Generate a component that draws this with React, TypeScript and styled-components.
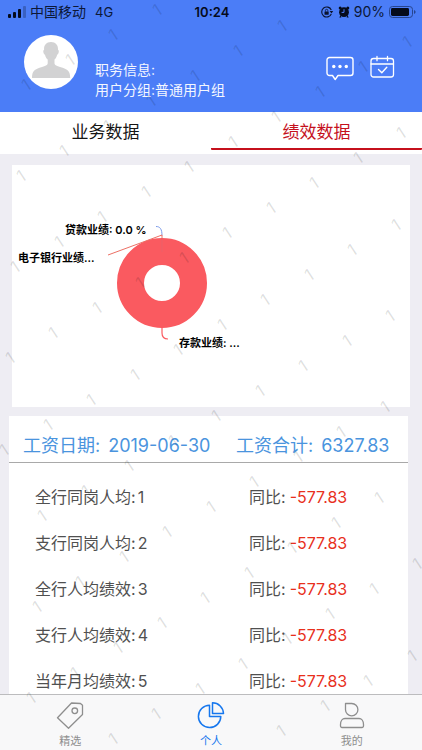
import React, { useEffect, useState } from "react";
import styled, { createGlobalStyle } from "styled-components";

const GlobalStyle = createGlobalStyle`
  *, *::before, *::after { box-sizing: border-box; }
  body {
    margin: 0;
    background: #eeedf3;
    font-family: Inter, "Noto Sans CJK SC", sans-serif;
    color: #111;
  }
  button { font-family: inherit; }
`;

const Screen = styled.div`
  position: relative;
  display: flex;
  flex-direction: column;
  height: 100vh;
  overflow: hidden;
`;

const Header = styled.header`
  flex: none;
  background: #4b7df7;
  padding-bottom: 12px;
`;

const StatusBar = styled.div`
  display: grid;
  grid-template-columns: 1fr auto 1fr;
  align-items: center;
  height: 24px;
  padding: 0 6px 0 8px;
  font-size: 14px;
  line-height: 24px;
  color: #0c1838;
`;

const StatusGroup = styled.div<{ $end?: boolean }>`
  display: flex;
  align-items: center;
  justify-content: ${(p) => (p.$end ? "flex-end" : "flex-start")};
  gap: ${(p) => (p.$end ? "4px" : "4px")};
`;

const Network = styled.span`
  margin-left: 5px;
  font-size: 13px;
`;

const Clock = styled.time`
  font-size: 13px;
  font-weight: 600;
  color: #050b1c;
`;

const Profile = styled.div`
  display: flex;
  align-items: flex-start;
  padding: 11px 26px 0 24px;
`;

const Avatar = styled.div`
  flex: none;
  width: 54px;
  height: 54px;
  border-radius: 50%;
  background: #fff;
  overflow: hidden;
`;

const ProfileText = styled.div`
  flex: 1;
  margin-left: 17px;
  padding-top: 25px;
  font-size: 14px;
  line-height: 20px;
  color: #f4f7ff;
  white-space: nowrap;
`;

const ProfileLine = styled.p`
  margin: 0;
`;

const HeaderActions = styled.div`
  display: flex;
  gap: 16px;
  padding-top: 20px;
`;

const IconButton = styled.button`
  display: block;
  padding: 0;
  border: 0;
  background: none;
  color: #fff;
  line-height: 0;
  cursor: pointer;
`;

const Tabs = styled.div`
  flex: none;
  display: grid;
  grid-template-columns: 1fr 1fr;
  height: 42px;
  padding-bottom: 4px;
  background: #fff;
`;

const Tab = styled.button<{ $active: boolean }>`
  padding: 4px 0 0;
  border: 0;
  border-bottom: 2px solid ${(p) => (p.$active ? "#c5101c" : "transparent")};
  border-radius: 1px;
  background: none;
  font-size: 17px;
  line-height: 32px;
  color: ${(p) => (p.$active ? "#c5101c" : "#151515")};
  cursor: pointer;
`;

const Content = styled.main`
  flex: 1;
  min-height: 0;
  padding-top: 11px;
  overflow-y: auto;
  scrollbar-width: none;
`;

const ChartCard = styled.section`
  margin: 0 12px;
  background: #fff;
`;

const ChartSvg = styled.svg`
  display: block;
  width: 100%;
  font-family: Inter, "Noto Sans CJK SC", sans-serif;
  font-size: 11px;
  font-weight: 600;
`;

const SalaryCard = styled.section`
  margin: 9px 14px 0 9px;
  background: #fff;
`;

const SalaryHead = styled.div`
  display: grid;
  grid-template-columns: 213fr 172fr;
  height: 47px;
  padding: 12px 0 0 14px;
  border-bottom: 1px solid #a9a9a9;
  font-size: 18px;
  line-height: 36px;
  color: #4a94de;
  white-space: nowrap;
`;

const HeadItem = styled.div`
  display: flex;
  align-items: center;
  height: 36px;
  gap: 8px;
`;

const Rows = styled.ul`
  margin: 0;
  padding: 11px 0 16px;
  list-style: none;
`;

const Row = styled.li`
  display: grid;
  grid-template-columns: 214fr 159fr;
  padding-left: 26px;
  font-size: 16px;
  line-height: 46px;
  color: #505050;
  white-space: nowrap;
`;

const Cell = styled.span<{ $gap: number }>`
  display: flex;
  gap: ${(p) => p.$gap}px;
`;

const Delta = styled.span`
  color: #e8301c;
`;

const BottomNav = styled.nav`
  flex: none;
  display: grid;
  grid-template-columns: repeat(3, 1fr);
  height: 56px;
  border-top: 1px solid #bcbcbe;
  background: #f8f8f9;
`;

const NavLink = styled.a<{ $active?: boolean }>`
  display: flex;
  flex-direction: column;
  align-items: center;
  padding-top: 6px;
  gap: 4px;
  font-size: 11px;
  line-height: 16px;
  color: ${(p) => (p.$active ? "#1677ee" : "#8e8e8e")};
  text-decoration: none;
`;

const WatermarkLayer = styled.svg`
  position: absolute;
  inset: 0;
  width: 100%;
  height: 100%;
  pointer-events: none;
  font-family: Inter, sans-serif;
  font-size: 17px;
  font-weight: 400;
`;

const WATERMARK = "1";

function latticePoints(width: number, height: number) {
  const points: { x: number; y: number }[] = [];
  for (let n = -30; n <= 30; n++) {
    for (let m = -60; m <= 60; m++) {
      const x = Math.round(64 - 43.5 * m - 5.5 * n);
      const y = Math.round(151 + 25 * m + 91.2 * n);
      if (x > 0 && x < width && y > 6 && y < height - 6) points.push({ x, y });
    }
  }
  return points;
}

function useWindowSize() {
  const read = () => ({ width: window.innerWidth, height: window.innerHeight });
  const [size, setSize] = useState(read);
  useEffect(() => {
    const onResize = () => setSize(read());
    window.addEventListener("resize", onResize);
    return () => window.removeEventListener("resize", onResize);
  }, []);
  return size;
}

function Watermark() {
  const { width, height } = useWindowSize();
  return (
    <WatermarkLayer aria-hidden="true">
      {latticePoints(width, height).map(({ x, y }) => (
        <text
          key={`${x},${y}`}
          transform={`translate(${x} ${y}) rotate(-32)`}
          textAnchor="middle"
          y="6"
          fill="#000"
          fillOpacity="0.13"
        >
          {WATERMARK}
        </text>
      ))}
    </WatermarkLayer>
  );
}

const SignalIcon = () => (
  <svg width="18" height="12" viewBox="0 0 18 12" fill="#050b1c" aria-hidden="true">
    <rect x="0" y="8" width="3" height="4" rx="1" />
    <rect x="5" y="6" width="3" height="6" rx="1" />
    <rect x="10" y="3" width="3" height="9" rx="1" />
    <rect x="15" y="0" width="3" height="12" rx="1" opacity="0.25" />
  </svg>
);

const RotationLockIcon = () => (
  <svg width="14" height="12" viewBox="0 0 14 12" fill="none" stroke="#0a1330" aria-hidden="true">
    <path d="M11.3 4A5 5 0 1 0 11.3 8" strokeWidth="1.1" />
    <path d="M9.6 5h3.6l-1.7 2.4z" fill="#0a1330" stroke="none" />
    <rect x="4.5" y="5.5" width="4.2" height="3.2" rx=".4" fill="#0a1330" stroke="none" />
    <path d="M5.4 5.6V4.5a1.2 1.2 0 0 1 2.4 0v1.1" strokeWidth=".8" />
  </svg>
);

const AlarmIcon = () => (
  <svg width="12" height="12" viewBox="0 0 12 12" aria-hidden="true">
    <g fill="#050b1c">
      <circle cx="6" cy="6.2" r="4.9" />
      <circle cx="2.2" cy="1.9" r="1.5" />
      <circle cx="9.8" cy="1.9" r="1.5" />
      <path d="M2.5 9l-1.2 2.4h2zM9.5 9l1.2 2.4h-2z" />
    </g>
    <path d="M6 3.2v3.2H3.6" fill="none" stroke="#4b7df7" strokeWidth="1" />
  </svg>
);

const BatteryIcon = () => (
  <svg width="27" height="12" viewBox="0 0 27 12" aria-hidden="true">
    <rect x=".5" y=".5" width="23" height="11" rx="3" fill="none" stroke="#27458f" />
    <rect x="2" y="2" width="18" height="8" rx="1.4" fill="#050b1c" />
    <path d="M25 4v4c1.2-.5 1.6-1.2 1.6-2S26.2 4.5 25 4z" fill="#27458f" />
  </svg>
);

const PersonSilhouette = () => (
  <svg width="54" height="54" viewBox="0 0 54 54" fill="#d2d2d3" aria-hidden="true">
    <path d="M27 7c4.6 0 7.3 3.1 7 7.8.9.3 1 1.5.6 2.9-.3 1.1-.8 1.9-1.5 2-.4 2.1-1.4 3.8-2.6 4.9v3.6c0 2.3 3.3 3 8.2 4.6 5 1.7 7.500 3.7 7.500 10.200H8c0-6.500 2.500-8.500 7.500-10.200 4.900-1.600 8.200-2.300 8.200-4.600v-3.600c-1.300-1.100-2.300-2.800-2.700-4.900-.7-.1-1.200-.9-1.500-2-.4-1.400-.3-2.600.6-2.900C19.700 10.100 22.400 7 27 7z" />
  </svg>
);

const MessageIcon = () => (
  <svg width="28" height="26" viewBox="0 0 28 26" fill="none" stroke="currentColor" strokeWidth="1.4" strokeLinejoin="round">
    <path d="M3.500 2.500h21a2.500 2.500 0 0 1 2.500 2.500v13a2.500 2.500 0 0 1-2.500 2.500H12l-2.800 4-2.700-4h-3A2.500 2.500 0 0 1 1 18V5a2.500 2.500 0 0 1 2.500-2.500z" />
    <g fill="currentColor" stroke="none">
      <circle cx="7.800" cy="11.500" r="1.700" />
      <circle cx="14" cy="11.500" r="1.700" />
      <circle cx="20.300" cy="11.500" r="1.700" />
    </g>
  </svg>
);

const CalendarIcon = () => (
  <svg width="26" height="26" viewBox="0 0 26 26" fill="none" stroke="currentColor" strokeWidth="1.3" strokeLinecap="round" strokeLinejoin="round">
    <rect x="1" y="3.500" width="22.500" height="18.500" rx="2.500" />
    <path d="M1 9H23.500M7 1.500v4.200M17.500 1.500v4.200" />
    <path d="M8.500 14.500l3.300 3.300 5-5.500" strokeWidth="1.400" />
  </svg>
);

const TagIcon = () => (
  <svg width="28" height="28" viewBox="0 0 28 28" fill="none" stroke="currentColor" strokeWidth="1.3" strokeLinejoin="round">
    <path d="M15.500 2L1.500 16.800 12.500 27.200 26.500 13.500V4.200L24.500 2.500z" />
    <circle cx="18.800" cy="9.800" r="2.800" />
  </svg>
);

const PieIcon = () => (
  <svg width="28" height="28" viewBox="0 0 28 28" fill="none" stroke="currentColor" strokeWidth="1.5" strokeLinejoin="round">
    <path d="M12.500 4.200A11.200 11.200 0 1 0 23.800 15.500H12.500z" />
    <path d="M15.500 1.800A11 11 0 0 1 26.500 12.500h-11z" />
  </svg>
);

const UserIcon = () => (
  <svg width="28" height="28" viewBox="0 0 28 28" fill="none" stroke="currentColor" strokeWidth="1.3" strokeLinejoin="round">
    <path d="M7.500 2.500h6.200a6.200 6.200 0 1 1-6.200 6.200z" />
    <path d="M7 17.500h14c2.500 0 4.500 2.500 4.500 6v1.500a1.500 1.500 0 0 1-1.500 1.500H4a1.500 1.500 0 0 1-1.500-1.500v-1.500c0-3.500 2-6 4.500-6z" />
  </svg>
);

const PerformanceChart = () => (
  <ChartSvg viewBox="0 0 398 242" role="img" aria-label="业绩占比">
    <circle cx="150" cy="118" r="31.5" fill="none" stroke="#fa5a60" strokeWidth="27" />
    <path d="M150 73V87" stroke="#e2646e" strokeWidth=".6" />
    <path d="M144 61.5c4 0 6 2.5 6 9" fill="none" stroke="#7c9bea" />
    <path d="M96 90L150 70v3" fill="none" stroke="#ec7065" />
    <path d="M150 163v5c0 4 2 6 6 6" fill="none" stroke="#fa5a60" strokeWidth="1.2" />
    <text x="53" y="69">贷款业绩: 0.0 %</text>
    <text x="6" y="97">电子银行业绩...</text>
    <text x="167" y="182">存款业绩: ...</text>
  </ChartSvg>
);

const tabs = ["业务数据", "绩效数据"];

const rows = [
  { label: "全行同岗人均:", value: "1", delta: "-577.83" },
  { label: "支行同岗人均:", value: "2", delta: "-577.83" },
  { label: "全行人均绩效:", value: "3", delta: "-577.83" },
  { label: "支行人均绩效:", value: "4", delta: "-577.83" },
  { label: "当年月均绩效:", value: "5", delta: "-577.83" },
];

export default function App() {
  const [active, setActive] = useState(1);

  return (
    <>
      <GlobalStyle />
      <Screen>
        <Header>
          <StatusBar>
            <StatusGroup>
              <SignalIcon />
              <span>中国移动</span>
              <Network>4G</Network>
            </StatusGroup>
            <Clock>10:24</Clock>
            <StatusGroup $end>
              <RotationLockIcon />
              <AlarmIcon />
              <span>90%</span>
              <BatteryIcon />
            </StatusGroup>
          </StatusBar>
          <Profile>
            <Avatar>
              <PersonSilhouette />
            </Avatar>
            <ProfileText>
              <ProfileLine>职务信息:</ProfileLine>
              <ProfileLine>用户分组:普通用户组</ProfileLine>
            </ProfileText>
            <HeaderActions>
              <IconButton type="button" aria-label="消息">
                <MessageIcon />
              </IconButton>
              <IconButton type="button" aria-label="日程">
                <CalendarIcon />
              </IconButton>
            </HeaderActions>
          </Profile>
        </Header>

        <Tabs role="tablist">
          {tabs.map((label, i) => (
            <Tab
              key={label}
              type="button"
              role="tab"
              aria-selected={i === active}
              $active={i === active}
              onClick={() => setActive(i)}
            >
              {label}
            </Tab>
          ))}
        </Tabs>

        <Content>
          <ChartCard>
            <PerformanceChart />
          </ChartCard>
          <SalaryCard>
            <SalaryHead>
              <HeadItem>
                <span>工资日期:</span>
                <span>2019-06-30</span>
              </HeadItem>
              <HeadItem>
                <span>工资合计:</span>
                <span>6327.83</span>
              </HeadItem>
            </SalaryHead>
            <Rows>
              {rows.map((row) => (
                <Row key={row.label}>
                  <Cell $gap={2}>
                    <span>{row.label}</span>
                    <span>{row.value}</span>
                  </Cell>
                  <Cell $gap={4}>
                    <span>同比:</span>
                    <Delta>{row.delta}</Delta>
                  </Cell>
                </Row>
              ))}
            </Rows>
          </SalaryCard>
        </Content>

        <BottomNav>
          <NavLink href="#featured">
            <TagIcon />
            精选
          </NavLink>
          <NavLink href="#personal" $active aria-current="page">
            <PieIcon />
            个人
          </NavLink>
          <NavLink href="#mine">
            <UserIcon />
            我的
          </NavLink>
        </BottomNav>
        <Watermark />
      </Screen>
    </>
  );
}
